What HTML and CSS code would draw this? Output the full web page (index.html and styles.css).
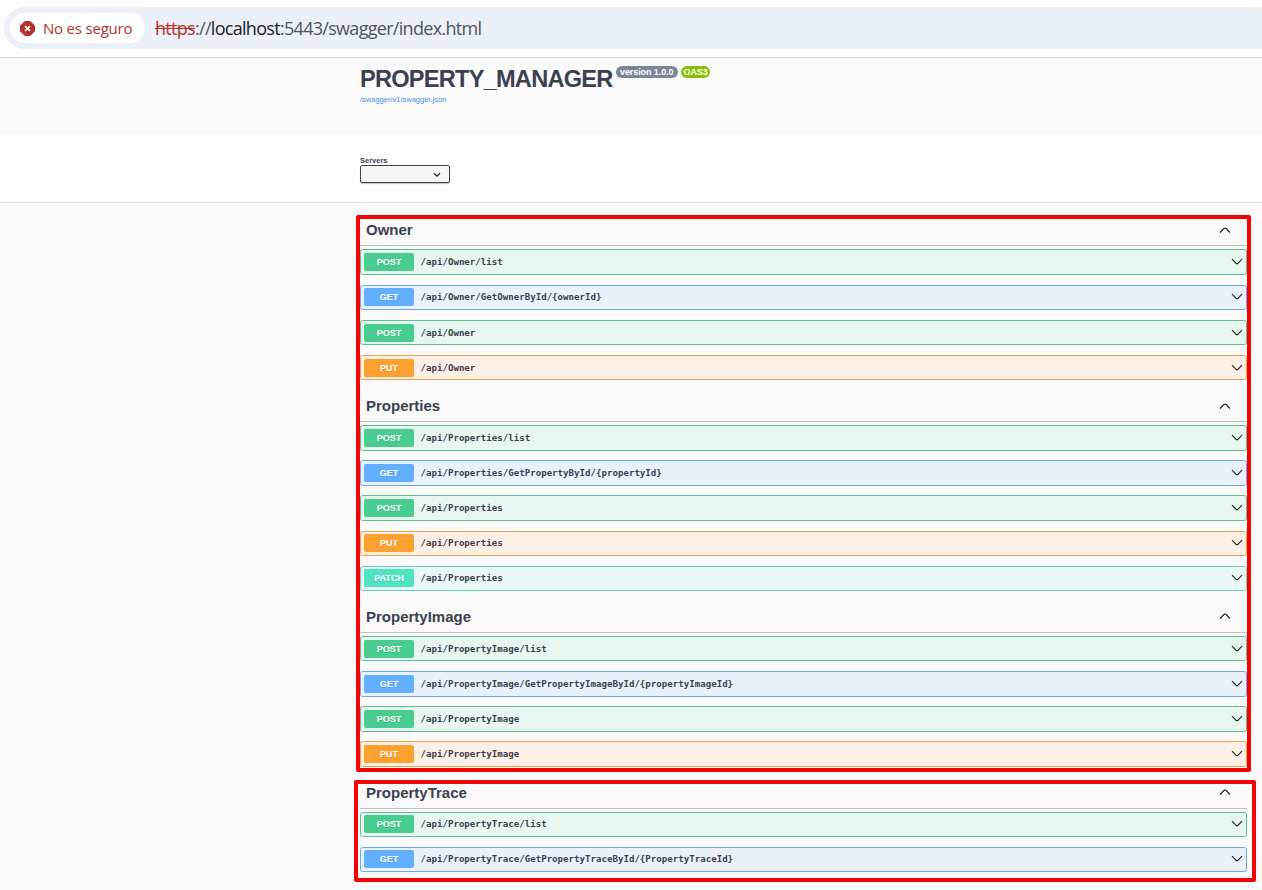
FILE: index.html
```html
<!DOCTYPE html>
<html lang="es">
<head>
<meta charset="utf-8">
<title>Swagger UI</title>
<link rel="stylesheet" href="styles.css">
</head>
<body>
<svg class="defs" aria-hidden="true">
  <symbol id="down" viewBox="0 0 12 8"><path d="M1 1.2L4.9 5.2Q6 6.2 7.1 5.2L11 1.2"/></symbol>
  <symbol id="up" viewBox="0 0 12 8"><path d="M1 6.5L4.9 2.5Q6 1.5 7.1 2.5L11 6.5"/></symbol>
</svg>
<header class="browser">
  <div class="omnibox">
    <div class="chip">
      <svg class="danger" viewBox="0 0 15 15"><path class="danger-bg" d="M4.8 .5h5.4l4.3 4.3v5.4l-4.3 4.3H4.8L.5 10.2V4.8z"/><path class="danger-x" d="M5.1 5.1l4.8 4.8M9.9 5.1L5.1 9.9"/></svg>
      <span class="chip-text">No es seguro</span>
    </div>
    <div class="url"><span class="scheme">https</span>://<span class="host">localhost</span>:5443/swagger/index.html</div>
  </div>
</header>
<section class="info">
  <div class="title-row">
    <h1 class="title">PROPERTY_MANAGER</h1>
    <span class="badge">version 1.0.0</span>
    <span class="badge oas">OAS3</span>
  </div>
  <a class="spec">/swagger/v1/swagger.json</a>
</section>
<section class="servers">
  <span class="servers-label">Servers</span>
  <div class="select"><svg class="select-arrow" viewBox="0 0 8 6"><path d="M1 1.3l3 2.9 3-2.9"/></svg></div>
</section>
<main class="api">
  <section class="tag">
    <h2 class="tag-head"><span>Owner</span><svg class="chev"><use href="#up"/></svg></h2>
    <div class="op post"><b class="method">POST</b><span class="path">/api/Owner/list</span><svg class="chev"><use href="#down"/></svg></div>
    <div class="op get"><b class="method">GET</b><span class="path">/api/Owner/GetOwnerById/{ownerId}</span><svg class="chev"><use href="#down"/></svg></div>
    <div class="op post"><b class="method">POST</b><span class="path">/api/Owner</span><svg class="chev"><use href="#down"/></svg></div>
    <div class="op put"><b class="method">PUT</b><span class="path">/api/Owner</span><svg class="chev"><use href="#down"/></svg></div>
  </section>
  <section class="tag">
    <h2 class="tag-head"><span>Properties</span><svg class="chev"><use href="#up"/></svg></h2>
    <div class="op post"><b class="method">POST</b><span class="path">/api/Properties/list</span><svg class="chev"><use href="#down"/></svg></div>
    <div class="op get"><b class="method">GET</b><span class="path">/api/Properties/GetPropertyById/{propertyId}</span><svg class="chev"><use href="#down"/></svg></div>
    <div class="op post"><b class="method">POST</b><span class="path">/api/Properties</span><svg class="chev"><use href="#down"/></svg></div>
    <div class="op put"><b class="method">PUT</b><span class="path">/api/Properties</span><svg class="chev"><use href="#down"/></svg></div>
    <div class="op patch"><b class="method">PATCH</b><span class="path">/api/Properties</span><svg class="chev"><use href="#down"/></svg></div>
  </section>
  <section class="tag">
    <h2 class="tag-head"><span>PropertyImage</span><svg class="chev"><use href="#up"/></svg></h2>
    <div class="op post"><b class="method">POST</b><span class="path">/api/PropertyImage/list</span><svg class="chev"><use href="#down"/></svg></div>
    <div class="op get"><b class="method">GET</b><span class="path">/api/PropertyImage/GetPropertyImageById/{propertyImageId}</span><svg class="chev"><use href="#down"/></svg></div>
    <div class="op post"><b class="method">POST</b><span class="path">/api/PropertyImage</span><svg class="chev"><use href="#down"/></svg></div>
    <div class="op put"><b class="method">PUT</b><span class="path">/api/PropertyImage</span><svg class="chev"><use href="#down"/></svg></div>
  </section>
  <section class="tag">
    <h2 class="tag-head"><span>PropertyTrace</span><svg class="chev"><use href="#up"/></svg></h2>
    <div class="op post"><b class="method">POST</b><span class="path">/api/PropertyTrace/list</span><svg class="chev"><use href="#down"/></svg></div>
    <div class="op get"><b class="method">GET</b><span class="path">/api/PropertyTrace/GetPropertyTraceById/{PropertyTraceId}</span><svg class="chev"><use href="#down"/></svg></div>
  </section>
  <div class="mark mark-main"></div>
  <div class="mark mark-trace"></div>
</main>
</body>
</html>
```
FILE: styles.css
```css
* { box-sizing: border-box; }
body { margin: 0; height: 890px; overflow: hidden; background: #fafafa; color: #3b4151; font-family: "Liberation Sans", Arial, sans-serif; }
svg { fill: none; stroke: #222; flex: none; }
.defs { display: none; }

.browser { height: 58px; padding: 7px 0 0 4px; background: #fff; border-bottom: 1px solid #e2e2e2; }
.omnibox { display: flex; align-items: center; height: 42px; padding-left: 6px; background: #ebf0f9; border-radius: 21px 0 0 21px; }
.chip { display: flex; align-items: center; width: 135px; height: 30px; padding-left: 10px; background: #fff; border-radius: 15px; color: #b3302b; font: 500 15px "Open Sans", sans-serif; letter-spacing: -.2px; white-space: nowrap; }
.chip-text { margin-top: -1px; }
.danger { width: 15px; height: 15px; margin-right: 8px; }
.danger-bg { fill: #b9302b; stroke: #b9302b; stroke-linejoin: round; }
.danger-x { stroke: #fff; stroke-width: 1.8; }
.url { margin-left: 10px; font: 18px "Open Sans", sans-serif; letter-spacing: -.7px; color: #50545a; white-space: nowrap; }
.scheme { color: #b9302b; text-decoration: line-through; }
.host { color: #202124; }

.info { height: 77px; padding: 6px 0 0 360px; }
.title-row { display: flex; align-items: flex-start; height: 30px; }
.title { margin: 0; font-size: 23.6px; line-height: 30px; letter-spacing: -.77px; }
.badge { height: 12px; margin: 2px 0 0 3px; padding: 0 4.5px; border-radius: 6px; background: #7d8492; color: #fff; font-size: 9px; font-weight: bold; line-height: 12px; letter-spacing: -.08px; white-space: nowrap; }
.oas { background: #89bf04; padding: 0 2.5px; }
.spec { display: block; margin-top: 1px; color: #4990e2; font-size: 7.5px; line-height: 9px; }

.servers { height: 68px; padding: 21px 0 0 360px; background: #fff; border-bottom: 1px solid #e2e2e2; }
.servers-label { display: block; font-size: 7.5px; font-weight: bold; line-height: 9px; }
.select { display: flex; align-items: center; justify-content: flex-end; width: 90px; height: 18px; padding-right: 8px; border: 1px solid #41444e; border-radius: 2px; background: #f7f7f7; box-shadow: 0 1px 1px rgba(0,0,0,.25); }
.select-arrow { width: 8px; height: 6px; margin-top: 1px; stroke-width: 1.3; }

.api { width: 887px; margin-left: 360px; padding-top: 11.4px; }
.tag-head { display: flex; justify-content: space-between; align-items: center; height: 32px; margin: 0 0 3.1px; padding: 0 16px 0 6px; border-bottom: 1px solid #bfc0c4; font-size: 15px; }
.chev { width: 12px; height: 8px; stroke-width: 1.15; }
.op { display: flex; align-items: center; height: 25.5px; margin-bottom: 9.65px; padding: 0 3px; border: 1px solid; border-radius: 2.5px; }
.method { width: 50px; height: 18px; margin-right: 6.5px; border-radius: 2px; color: #fff; font-size: 9px; line-height: 18px; text-align: center; text-shadow: 0 1px 0 rgba(0,0,0,.1); }
.path { flex: 1; font: bold 9.12px "DejaVu Sans Mono", monospace; }
.post { background: #e7f6ee; border-color: #5dc08f; }
.post .method { background: #49cc90; }
.get { background: #e9f2fb; border-color: #6da9e6; }
.get .method { background: #61affe; }
.put { background: #fcf0e6; border-color: #eba44d; }
.put .method { background: #fca130; }
.patch { background: #e8f8f4; border-color: #6bd3bb; }
.patch .method { background: #50e3c2; }

/* annotation frames drawn over the listing */
.mark { position: absolute; border: 4px solid #f40206; border-radius: 2px; }
.mark-main { left: 356px; top: 215px; width: 895px; height: 557px; }
.mark-trace { left: 354px; top: 780px; width: 902px; height: 102px; }
```
